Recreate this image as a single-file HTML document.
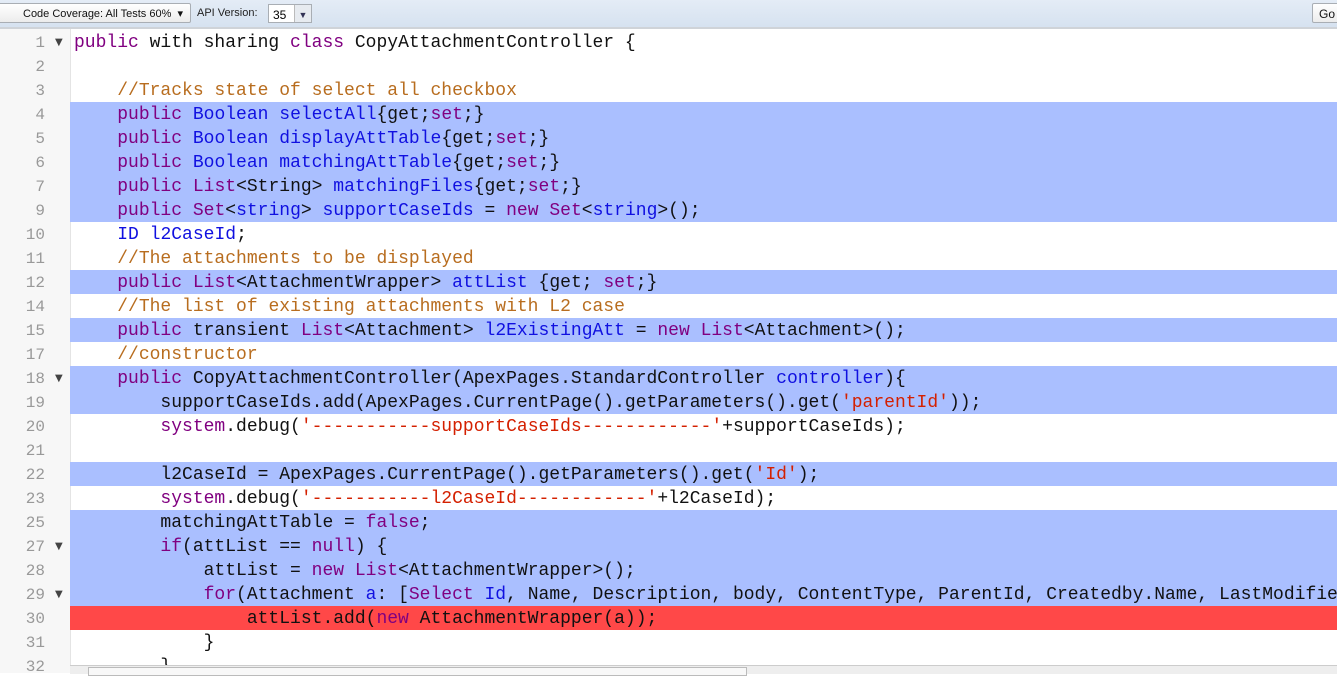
<!DOCTYPE html>
<html><head><meta charset="utf-8"><style>
body{margin:0;width:1337px;height:673px;overflow:hidden;background:#fff;font-family:"Liberation Sans",sans-serif;position:relative}
.tb{position:absolute;left:0;top:0;width:1337px;height:27px;background:linear-gradient(#e4ecf6,#d6e2f0);border-bottom:2px solid #cfd3d8}
.btn{position:absolute;top:3px;height:20px;border:1px solid #a9aeb4;background:linear-gradient(#fff,#ececec);font-size:11px;line-height:20px;color:#111;box-sizing:border-box;border-radius:2px}
.gut{position:absolute;left:0;top:29px;width:70px;height:644px;background:#f7f7f7;border-right:1px solid #e4e4e4}
.line{position:absolute;left:0;width:1337px;height:24px;font-family:"Liberation Mono",monospace;font-size:18px;line-height:26px;white-space:pre}
.n{position:absolute;left:0;width:45px;text-align:right;color:#999;font-size:16px}
.f{position:absolute;left:55px;font-size:10px;color:#444;font-family:"DejaVu Sans",sans-serif}
.c{position:absolute;left:74px;color:#111}
.hb{position:absolute;left:70px;right:0;top:0;height:24px;background:#aabfff}
.hr{position:absolute;left:70px;right:0;top:0;height:24px;background:#ff4848}
.k{color:#800080}.t{color:#1010e0}.m{color:#b86d1f}.s{color:#d42000}
</style></head><body>
<div class="tb">
<div class="btn" style="left:-2px;width:193px;padding-left:24px">Code Coverage: All Tests 60% &nbsp;▾</div>
<div style="position:absolute;left:197px;top:3px;font-size:11px;line-height:20px;color:#222">API Version:</div>
<div style="position:absolute;left:268px;top:4px;width:44px;height:19px;border:1px solid #a9aeb4;background:#fff;font-size:12px;line-height:20px;box-sizing:border-box;padding-left:4px">35<span style="position:absolute;right:0;top:0;width:16px;height:17px;background:#e7ebf0;border-left:1px solid #bbb;font-size:9px;text-align:center;color:#335">▼</span></div>
<div class="btn" style="left:1312px;width:40px;padding-left:6px;font-size:12px">Go T</div>
</div>
<div class="gut"></div>
<div id="code"></div>
<div style="position:absolute;left:70px;top:665px;width:1267px;height:8px;background:#eee;border-top:1px solid #ccc"><div style="position:absolute;left:18px;top:1px;width:657px;height:7px;background:#f8f8f8;border:1px solid #bbb"></div></div>
<script>
const L=[
['<span class="k">public</span> with sharing <span class="k">class</span> CopyAttachmentController {','',1],
['','',0],
['    <span class="m">//Tracks state of select all checkbox</span>','',0],
['    <span class="k">public</span> <span class="t">Boolean</span> <span class="t">selectAll</span>{get;<span class="k">set</span>;}','b',0],
['    <span class="k">public</span> <span class="t">Boolean</span> <span class="t">displayAttTable</span>{get;<span class="k">set</span>;}','b',0],
['    <span class="k">public</span> <span class="t">Boolean</span> <span class="t">matchingAttTable</span>{get;<span class="k">set</span>;}','b',0],
['    <span class="k">public</span> <span class="k">List</span>&lt;String&gt; <span class="t">matchingFiles</span>{get;<span class="k">set</span>;}','b',0],
['    <span class="k">public</span> <span class="k">Set</span>&lt;<span class="t">string</span>&gt; <span class="t">supportCaseIds</span> = <span class="k">new</span> <span class="k">Set</span>&lt;<span class="t">string</span>&gt;();','b',0],
['','b',0],
['    <span class="t">ID</span> <span class="t">l2CaseId</span>;','',0],
['    <span class="m">//The attachments to be displayed</span>','',0],
['    <span class="k">public</span> <span class="k">List</span>&lt;AttachmentWrapper&gt; <span class="t">attList</span> {get; <span class="k">set</span>;}','b',0],
['','',0],
['    <span class="m">//The list of existing attachments with L2 case</span>','',0],
['    <span class="k">public</span> transient <span class="k">List</span>&lt;Attachment&gt; <span class="t">l2ExistingAtt</span> = <span class="k">new</span> <span class="k">List</span>&lt;Attachment&gt;();','b',0],
['','',0],
['    <span class="m">//constructor</span>','',0],
['    <span class="k">public</span> CopyAttachmentController(ApexPages.StandardController <span class="t">controller</span>){','b',1],
['        supportCaseIds.add(ApexPages.CurrentPage().getParameters().get(<span class="s">\'parentId\'</span>));','b',0],
['        <span class="k">system</span>.debug(<span class="s">\'-----------supportCaseIds------------\'</span>+supportCaseIds);','',0],
['','',0],
['        l2CaseId = ApexPages.CurrentPage().getParameters().get(<span class="s">\'Id\'</span>);','b',0],
['        <span class="k">system</span>.debug(<span class="s">\'-----------l2CaseId------------\'</span>+l2CaseId);','',0],
['','b',0],
['        matchingAttTable = <span class="k">false</span>;','b',0],
['','b',0],
['        <span class="k">if</span>(attList == <span class="k">null</span>) {','b',1],
['            attList = <span class="k">new</span> <span class="k">List</span>&lt;AttachmentWrapper&gt;();','b',0],
['            <span class="k">for</span>(Attachment <span class="t">a</span>: [<span class="k">Select</span> <span class="t">Id</span>, Name, Description, body, ContentType, ParentId, Createdby.Name, LastModifiedDate','b',1],
['                attList.add(<span class="k">new</span> AttachmentWrapper(a));','r',0],
['            }','',0],
['        }','',0]];
const rows=[[1],[2],[3],[4],[5],[6],[7],[8,9],[10],[11],[12],[13,14],[15],[16,17],[18],[19],[20],[21],[22],[23],[24,25],[26,27],[28],[29],[30],[31],[32]];
let h='';
rows.forEach((r,i)=>{
 const top=30+i*24;
 let txt='',bg='',fold=0;
 r.forEach(n=>{const x=L[n-1];if(x[0])txt=x[0];if(x[1])bg=x[1];if(x[2])fold=1;});
 const num=r.length>1?r[r.length-1]:r[0];
 h+=`<div class="line" style="top:${top}px">${bg=='b'?'<div class="hb"></div>':bg=='r'?'<div class="hr"></div>':''}<span class="n">${num}</span>${fold?'<span class="f">▼</span>':''}<span class="c">${txt}</span></div>`;
});
document.getElementById('code').innerHTML=h;
</script>
</body></html>
